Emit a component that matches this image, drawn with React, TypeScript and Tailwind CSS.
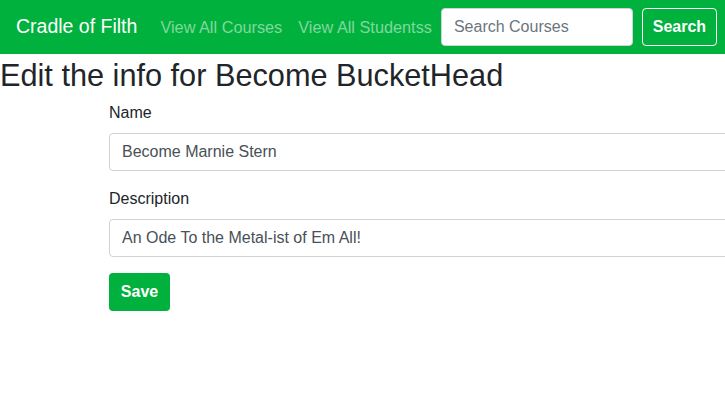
export default function App() {
  return (
    <div className="w-[725px] h-[400px] overflow-hidden bg-white text-[#212529]" style={{ fontFamily: '"Liberation Sans", Arial, sans-serif' }}>
      <nav className="h-[54px] bg-[#00b13d] flex items-center pl-4 whitespace-nowrap">
        <span className="shrink-0 text-white text-[19.5px] mr-[23px]">Cradle of Filth</span>
        <span className="shrink-0 text-[#80d89e] text-[16.3px] mr-4">View All Courses</span>
        <span className="shrink-0 text-[#80d89e] text-[16.3px] mr-[9px]">View All Studentss</span>
        <div className="shrink-0 w-[192px] h-[38px] bg-white rounded border border-[#ced4da] flex items-center pl-3 text-[16px] text-[#6c757d] mr-[9px]">Search Courses</div>
        <div className="shrink-0 w-[75px] h-[38px] rounded border border-white flex items-center justify-center text-white text-[16px] font-bold">Search</div>
      </nav>
      <h1 className="text-[30.7px] leading-[40px] mt-[2px] font-normal whitespace-nowrap">Edit the info for Become BucketHead</h1>
      <div className="pl-[109px] mt-[5px]">
        <div className="text-[16px] leading-6 mb-2">Name</div>
        <div className="w-[720px] h-[38px] border border-[#ced4da] rounded flex items-center pl-3 text-[16px] text-[#495057]">Become Marnie Stern</div>
        <div className="text-[16px] leading-6 mt-4 mb-2">Description</div>
        <div className="w-[720px] h-[38px] border border-[#ced4da] rounded flex items-center pl-3 text-[16px] text-[#495057]">An Ode To the Metal-ist of Em All!</div>
        <div className="mt-4 w-[61px] h-[38px] rounded bg-[#00b13d] text-white font-bold text-[16px] flex items-center justify-center">Save</div>
      </div>
    </div>
  );
}
